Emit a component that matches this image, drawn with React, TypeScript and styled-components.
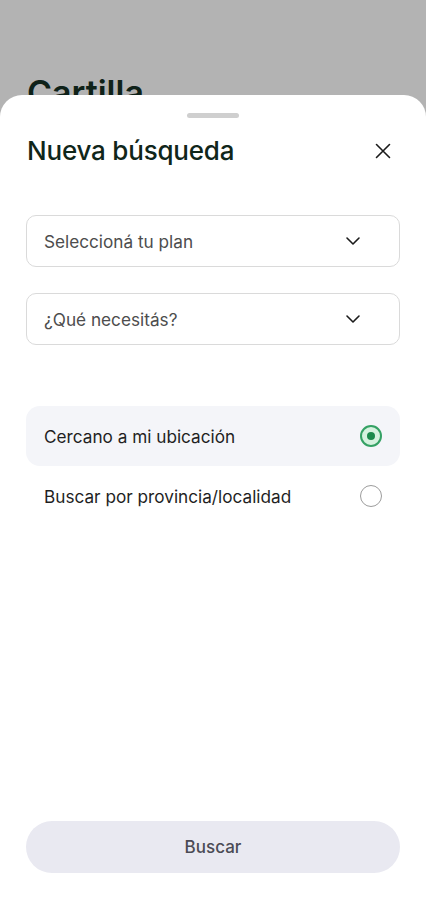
import React from 'react'
import styled, { createGlobalStyle } from 'styled-components'

const GlobalStyle = createGlobalStyle`
  * {
    box-sizing: border-box;
  }

  html,
  body {
    margin: 0;
    padding: 0;
    background-color: #b3b3b3;
    font-family: Inter, 'Liberation Sans', Arial, sans-serif;
    -webkit-font-smoothing: antialiased;
  }
`

const Page = styled.div`
  display: flex;
  flex-direction: column;
  min-height: 900px;
`

const Backdrop = styled.div`
  height: 95px;
  overflow: hidden;
  padding: 72px 27px 0;
`

const PageTitle = styled.h1`
  margin: 0;
  font-size: 34px;
  font-weight: 600;
  color: #0f2219;
  line-height: normal;
`

const Sheet = styled.div`
  flex: 1;
  display: flex;
  flex-direction: column;
  background-color: #ffffff;
  border-radius: 22px 22px 0 0;
  padding: 0 26px 27px;
`

const Handle = styled.div`
  align-self: center;
  width: 52px;
  height: 5px;
  margin-top: 18px;
  border-radius: 3px;
  background-color: #cfcfcf;
`

const Header = styled.div`
  display: flex;
  align-items: center;
  justify-content: space-between;
  height: 36px;
  margin-top: 14px;
`

const Title = styled.h2`
  margin: 0;
  padding-left: 1px;
  font-size: 26px;
  font-weight: 500;
  letter-spacing: -0.2px;
  color: #10261a;
`

const CloseButton = styled.button`
  display: flex;
  align-items: center;
  justify-content: center;
  width: 28px;
  height: 28px;
  margin-right: 3px;
  margin-top: 2px;
  padding: 0;
  border: 0;
  background: transparent;
  color: #1b1b1b;
`

const Fields = styled.div`
  display: flex;
  flex-direction: column;
  gap: 26px;
  margin-top: 47px;
`

const SelectBox = styled.div`
  display: flex;
  align-items: center;
  justify-content: space-between;
  height: 52px;
  padding: 0 38px 0 17px;
  border: 1px solid #dadada;
  border-radius: 10px;
  font-size: 17.2px;
  color: #4d4d4d;
`

const Options = styled.div`
  display: flex;
  flex-direction: column;
  margin-top: 61px;
`

const Option = styled.div<{ $active?: boolean }>`
  display: flex;
  align-items: center;
  justify-content: space-between;
  height: 60px;
  padding: 0 18px;
  border-radius: 14px;
  background-color: ${({ $active }) => ($active ? '#f4f5f9' : 'transparent')};
  font-size: 17.2px;
  color: #1f1f1f;
`

const Radio = styled.span<{ $checked?: boolean }>`
  display: flex;
  align-items: center;
  justify-content: center;
  width: 22px;
  height: 22px;
  border-radius: 50%;
  border: ${({ $checked }) => ($checked ? '2px solid #34a164' : '1.5px solid #9c9c9c')};
  background-color: ${({ $checked }) => ($checked ? '#d5f2df' : '#ffffff')};

  &::after {
    content: '';
    display: ${({ $checked }) => ($checked ? 'block' : 'none')};
    width: 8px;
    height: 8px;
    border-radius: 50%;
    background-color: #1c8a4c;
  }
`

const SearchButton = styled.button`
  margin-top: auto;
  height: 52px;
  border: 0;
  border-radius: 26px;
  background-color: #e9e9f1;
  font-family: inherit;
  font-size: 17px;
  font-weight: 500;
  color: #4b4b55;
`

const Chevron = () => (
  <svg width="16" height="10" viewBox="0 0 16 10" fill="none">
    <path
      d="M2 2l6 6 6-6"
      stroke="#1b1b1b"
      strokeWidth="1.6"
      strokeLinecap="round"
      strokeLinejoin="round"
    />
  </svg>
)

const CloseIcon = () => (
  <svg width="16" height="16" viewBox="0 0 16 16" fill="none">
    <path
      d="M1.5 1.5l13 13M14.5 1.5l-13 13"
      stroke="currentColor"
      strokeWidth="1.6"
      strokeLinecap="round"
    />
  </svg>
)

const selects = ['Seleccioná tu plan', '¿Qué necesitás?']

const locations = [
  { id: 'near', label: 'Cercano a mi ubicación' },
  { id: 'province', label: 'Buscar por provincia/localidad' },
]

export default function App() {
  const [location, setLocation] = React.useState('near')

  return (
    <Page>
      <GlobalStyle />
      <Backdrop>
        <PageTitle>Cartilla</PageTitle>
      </Backdrop>
      <Sheet>
        <Handle />
        <Header>
          <Title>Nueva búsqueda</Title>
          <CloseButton aria-label="Cerrar">
            <CloseIcon />
          </CloseButton>
        </Header>

        <Fields>
          {selects.map((placeholder) => (
            <SelectBox key={placeholder}>
              {placeholder}
              <Chevron />
            </SelectBox>
          ))}
        </Fields>

        <Options>
          {locations.map((item) => (
            <Option
              key={item.id}
              $active={location === item.id}
              onClick={() => setLocation(item.id)}
            >
              {item.label}
              <Radio $checked={location === item.id} />
            </Option>
          ))}
        </Options>

        <SearchButton>Buscar</SearchButton>
      </Sheet>
    </Page>
  )
}
